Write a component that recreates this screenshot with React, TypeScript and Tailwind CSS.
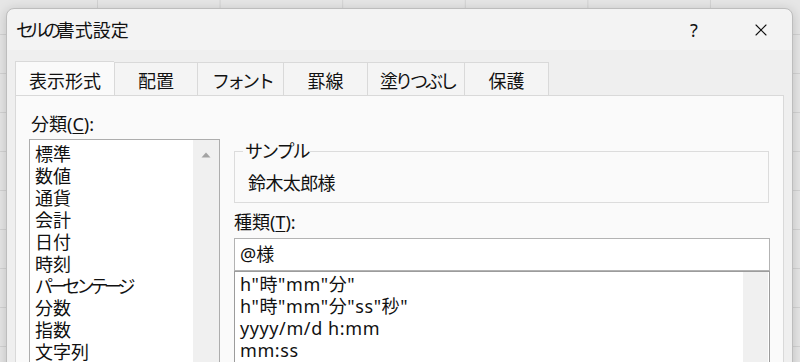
import { X } from 'lucide-react';

const tabs = [
    { label: '表示形式', width: 'w-[99px]', kana: '' },
    { label: '配置', width: 'w-[83px]', kana: '' },
    { label: 'フォント', width: 'w-[86px]', kana: 'tracking-[-3px] pl-[3px]' },
    { label: '罫線', width: 'w-[84px]', kana: '' },
    { label: '塗りつぶし', width: 'w-[97px]', kana: 'tracking-[-3px] pl-[3px]' },
    { label: '保護', width: 'w-[85px]', kana: '' },
];

const categories = [
    { label: '標準' },
    { label: '数値' },
    { label: '通貨' },
    { label: '会計' },
    { label: '日付' },
    { label: '時刻' },
    { label: 'パーセンテージ', kana: true },
    { label: '分数' },
    { label: '指数' },
    { label: '文字列' },
];

const formats = ['h"時"mm"分"', 'h"時"mm"分"ss"秒"', 'yyyy/m/d h:mm', 'mm:ss'];

const App = () => {
    return (
        <div className="h-[362px] w-[800px] overflow-hidden bg-[#e6e6e6] bg-[linear-gradient(to_right,#d3d3d3_1px,transparent_1px),linear-gradient(to_bottom,#d3d3d3_1px,transparent_1px)] bg-size-[122.6px_39px] bg-position-[97px_34px] pt-[8px] pl-[6px] font-['Noto_Sans','Noto_Sans_CJK_JP',sans-serif] text-[18px] text-[#111111]">
            <div className="flex h-[400px] w-[787px] flex-col overflow-hidden rounded-t-[8px] border border-[#bdbdbd] bg-[#f3f3f3] shadow-[0_2px_12px_rgba(0,0,0,0.18)]">
                {/* title bar */}
                <div className="flex h-[41px] shrink-0 items-center pl-[9px]">
                    <span className="leading-[22px]">
                        <span className="tracking-[-4.4px]">セルの</span>
                        書式設定
                    </span>
                    <div className="ml-auto flex items-center pr-[8px]">
                        <span className="flex w-[46px] justify-center leading-[22px]">?</span>
                        <span className="ml-[21px] flex w-[46px] justify-center">
                            <X size={20} strokeWidth={1.3} />
                        </span>
                    </div>
                </div>

                {/* body */}
                <div className="flex flex-1 flex-col bg-[#efefef] px-[8px] pt-[11px]">
                    <div className="flex">
                        {tabs.map((tab, i) => (
                            <div
                                key={tab.label}
                                className={`flex h-[33px] items-center justify-center border-t border-l border-[#d9d9d9] pt-[4px] leading-[22px] ${tab.width} ${tab.kana} ${
                                    i === tabs.length - 1 ? 'border-r' : ''
                                } ${i === 0 ? 'relative z-10 -mb-px h-[34px] bg-[#fafafa]' : 'mt-px h-[32px] bg-[#f4f4f4]'}`}
                            >
                                {tab.label}
                            </div>
                        ))}
                    </div>

                    <div className="flex flex-1 gap-[14px] border border-[#d9d9d9] bg-[#fafafa] px-[13px] pt-[17px]">
                        {/* category */}
                        <div className="flex w-[191px] flex-col">
                            <p className="h-[22px] pl-[2px] leading-[22px]">
                                分類(<span className="underline underline-offset-2">C</span>):
                            </p>
                            <div className="mt-[4px] flex flex-1 border border-[#adadad] bg-white">
                                <ul className="flex-1 pt-[3px] pl-[5px]">
                                    {categories.map((item) => (
                                        <li key={item.label} className={`leading-[22px] ${item.kana ? 'tracking-[-4.2px]' : ''}`}>
                                            {item.label}
                                        </li>
                                    ))}
                                </ul>
                                <div className="w-[26px] bg-[#f0f0f0]">
                                    <div className="flex h-[30px] items-center justify-center">
                                        <svg width="10" height="6" viewBox="0 0 10 6">
                                            <path d="M5 0.5 L9.5 5.5 L0.5 5.5 Z" fill="#a3a3a3" />
                                        </svg>
                                    </div>
                                </div>
                            </div>
                        </div>

                        {/* sample + type */}
                        <div className="flex w-[536px] flex-col pt-[38px]">
                            <div className="relative h-[52px] w-[535px] border border-[#dcdcdc] pt-[20px] pl-[13px]">
                                <span className="absolute -top-[12px] left-[8px] bg-[#fafafa] px-[2px] leading-[22px] tracking-[-2px]">
                                    サンプル
                                </span>
                                <p className="leading-[22px] tracking-[-0.6px]">鈴木太郎様</p>
                            </div>
                            <p className="mt-[8px] h-[22px] leading-[22px]">
                                種類(<span className="underline underline-offset-2">T</span>):
                            </p>
                            <div className="mt-[5px] flex h-[33px] items-center border border-[#b3b3b3] bg-white pl-[5px]">
                                @様
                            </div>
                            <div className="flex flex-1 border border-[#9c9c9c] bg-white">
                                <ul className="flex-1 pt-[1px] pl-[5px] tracking-[0.6px]">
                                    {formats.map((item) => (
                                        <li key={item} className="leading-[22px]">
                                            {item}
                                        </li>
                                    ))}
                                </ul>
                                <div className="mr-px w-[25px] bg-[#f0f0f0]" />
                            </div>
                        </div>
                    </div>
                </div>
            </div>
        </div>
    );
};

export default App;
